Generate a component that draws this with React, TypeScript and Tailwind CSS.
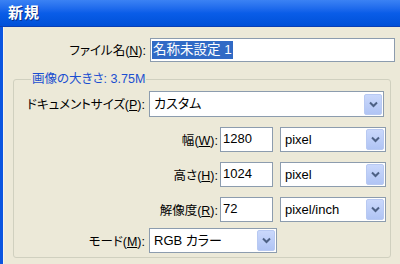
const font = "font-['Liberation_Sans','Noto_Sans_CJK_JP',sans-serif] [font-feature-settings:'palt']";

function Chevron() {
  return (
    <svg width="9" height="7" viewBox="0 0 9 7">
      <path d="M1 1.5 L4.5 5 L8 1.5" fill="none" stroke="#4d6185" strokeWidth="2" />
    </svg>
  );
}

function Select({ value, className }: { value: string; className: string }) {
  return (
    <div className={`flex items-center border border-[#8c9cae] bg-white pl-[4px] pr-[1px] ${className}`}>
      <span className="text-[13px] text-black">{value}</span>
      <div className="ml-auto flex h-[21px] w-[18px] items-center justify-center rounded-[2px] border border-[#b8c9f2] bg-gradient-to-b from-[#cad8fb] to-[#b0c4f4]">
        <Chevron />
      </div>
    </div>
  );
}

function Field({ value }: { value: string }) {
  return (
    <div className="flex h-[25px] w-[53px] items-start border border-[#8c9cae] bg-white px-[2px] pt-[3px] text-[13px] leading-[15px] text-black">
      {value}
    </div>
  );
}

function Label({ text, k, rest = "):" }: { text: string; k: string; rest?: string }) {
  return (
    <span className="text-[12.5px] text-black">
      {text}(<span className="underline">{k}</span>{rest}
    </span>
  );
}

function UnitRow({ text, k, value, unit }: { text: string; k: string; value: string; unit: string }) {
  return (
    <div className="grid grid-cols-[69px_53px_106px] items-center gap-x-[2px]">
      <div className="text-right">
        <Label text={text} k={k} />
      </div>
      <Field value={value} />
      <Select value={unit} className="ml-[5px] h-[25px] w-[106px]" />
    </div>
  );
}

export default function App() {
  return (
    <div className={`flex h-[264px] w-[400px] flex-col overflow-hidden bg-[#ece9d8] ${font}`}>
      <div className="flex h-[27px] shrink-0 items-center border-b border-[#0a3fb4] bg-gradient-to-b from-[#3b82f4] via-[#0a5de8] to-[#0050d8] pl-[8px]">
        <span className="text-[15px] font-bold tracking-[1px] text-white [text-shadow:1px_1px_0_#0a2f8a]">新規</span>
      </div>
      <div className="flex flex-1">
        <div className="w-[3px] bg-[#0b55e0]" />
        <div className="flex-1 border-l border-[#f6f4ec]">
          <div className="grid grid-cols-[142px_245px] items-center gap-x-[4px] pt-[11px]">
            <div className="text-right">
              <Label text="ファイル名" k="N" />
            </div>
            <div className="flex h-[24px] items-center border border-[#8c9cae] bg-white pl-[1px]">
              <span className="bg-[#316ac5] px-[1px] text-[13.5px] leading-[18px] text-white">名称未設定 1</span>
            </div>
          </div>

          <fieldset className="ml-[9px] mt-[10px] w-[378px] rounded-[3px] border border-[#d0d0bf] pb-[4px] pr-[6px]">
            <legend className="ml-[17px] px-[1px] text-[12.5px] leading-[14px] text-[#1b4fd0]">画像の大きさ: 3.75M</legend>
            <div className="grid grid-cols-[131px_235px] items-center gap-x-[4px] gap-y-[10px] pt-[5px]">
              <div className="text-right">
                <Label text="ドキュメントサイズ" k="P" />
              </div>
              <Select value="カスタム" className="h-[26px] w-[235px]" />

              <div />
              <UnitRow text="幅" k="W" value="1280" unit="pixel" />

              <div />
              <UnitRow text="高さ" k="H" value="1024" unit="pixel" />

              <div />
              <UnitRow text="解像度" k="R" value="72" unit="pixel/inch" />

              <div className="-mt-[4px] text-right">
                <Label text="モード" k="M" />
              </div>
              <Select value="RGB カラー" className="-mt-[4px] h-[25px] w-[128px]" />
            </div>
          </fieldset>
        </div>
      </div>
    </div>
  );
}
